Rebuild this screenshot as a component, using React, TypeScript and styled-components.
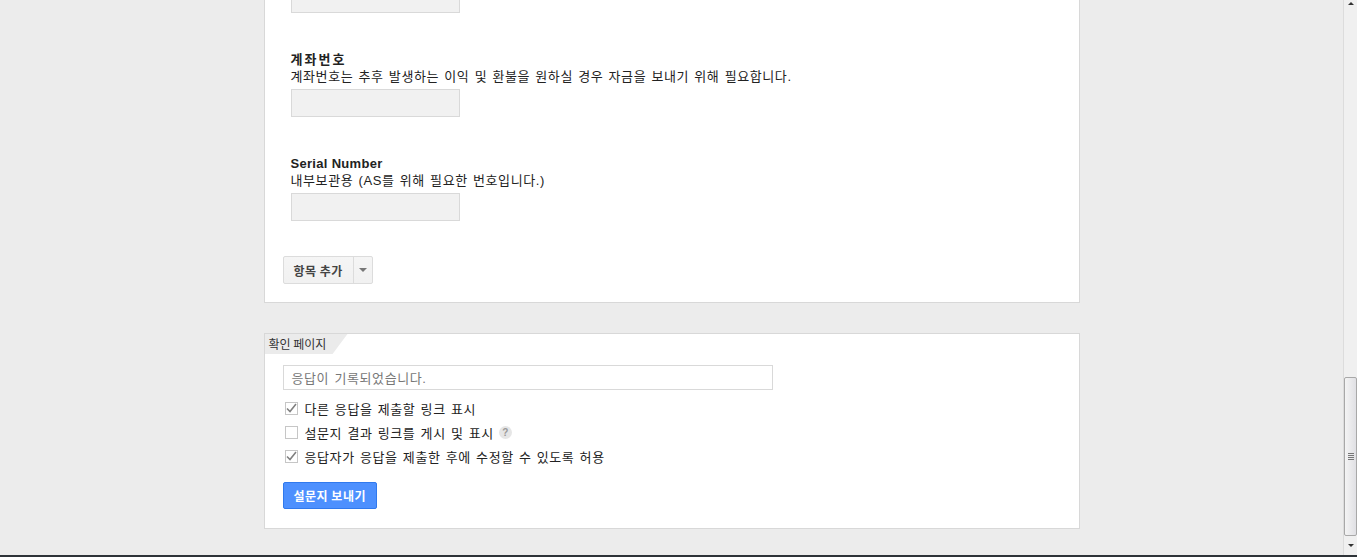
import styled, { createGlobalStyle } from "styled-components";
import { FC } from "react";

const GlobalStyle = createGlobalStyle`
  html, body {
    margin: 0;
    padding: 0;
    background: #ececec;
    overflow: hidden;
  }
  body {
    font-family: "Liberation Sans", "Noto Sans CJK KR", sans-serif;
    font-size: 13px;
    letter-spacing: 0.6px;
    word-spacing: 1px;
    color: #222;
  }
`;

const Screen = styled.div`
  width: 1357px;
  height: 557px;
  display: flex;
  flex-direction: column;
  overflow: hidden;
`;

const Window = styled.div`
  flex: 1;
  display: flex;
  min-height: 0;
`;

const Viewport = styled.main`
  flex: 1;
  overflow: hidden;
  display: flex;
  flex-direction: column;
  align-items: center;
`;

const Column = styled.div`
  width: 816px;
  margin-top: -32px;
  display: flex;
  flex-direction: column;
  gap: 30px;
`;

const Card = styled.section<{ $top?: number; $bottom?: number }>`
  background: #fff;
  border: 1px solid #d8d8d8;
  padding: ${(p) => p.$top ?? 0}px 18px ${(p) => p.$bottom ?? 18}px 18px;
  display: flex;
  flex-direction: column;
  align-items: flex-start;
`;

const FieldList = styled.div`
  display: flex;
  flex-direction: column;
  gap: 38px;
  padding-left: 8px;
`;

const Field = styled.div`
  display: flex;
  flex-direction: column;
`;

const FieldTitle = styled.div<{ $latin?: boolean }>`
  font-weight: bold;
  line-height: 17px;
  letter-spacing: ${(p) => (p.$latin ? "0.3px" : "2px")};
  word-spacing: 0;
  color: #222;
`;

const FieldHelp = styled.div`
  line-height: 17px;
  color: #222;
`;

const TextBox = styled.div<{ $w?: number; $h?: number }>`
  width: ${(p) => p.$w ?? 169}px;
  height: ${(p) => p.$h ?? 28}px;
  box-sizing: border-box;
  background: #f1f1f1;
  border: 1px solid #d9d9d9;
  margin-top: 4px;
`;

const SplitButton = styled.div`
  display: flex;
  margin-top: 35px;
  height: 28px;
  box-sizing: border-box;
  border: 1px solid #dcdcdc;
  border-radius: 2px;
  background: linear-gradient(#f5f5f5, #f1f1f1);
`;

const SplitLabel = styled.span`
  display: flex;
  align-items: center;
  padding: 0 10px;
  font-family: "Noto Sans CJK KR", sans-serif;
  font-size: 12px;
  font-weight: bold;
  letter-spacing: 0.5px;
  word-spacing: 0;
  color: #444;
  border-right: 1px solid #dcdcdc;
`;

const SplitArrow = styled.span`
  width: 18px;
  display: flex;
  align-items: center;
  justify-content: center;
  &::after {
    content: "";
    border-left: 4px solid transparent;
    border-right: 4px solid transparent;
    border-top: 4px solid #777;
  }
`;

const TabHeader = styled.div`
  align-self: stretch;
  margin: 0 -18px;
  height: 20px;
  display: flex;
`;

const TabLabel = styled.span`
  width: 83px;
  padding-left: 4px;
  box-sizing: border-box;
  background: #ebebeb;
  clip-path: polygon(0 0, 100% 0, 82% 100%, 0 100%);
  font-family: "Noto Sans CJK KR", sans-serif;
  font-size: 12px;
  letter-spacing: 0;
  word-spacing: 0;
  line-height: 20px;
  color: #333;
`;

const MessageInput = styled.div`
  width: 490px;
  height: 25px;
  box-sizing: border-box;
  margin-top: 11px;
  border: 1px solid #d9d9d9;
  padding-left: 8px;
  display: flex;
  align-items: center;
  color: #777;
`;

const CheckList = styled.div`
  display: flex;
  flex-direction: column;
  margin-top: 6px;
`;

const CheckRow = styled.label`
  height: 24px;
  display: flex;
  align-items: center;
  padding-left: 2px;
  color: #222;
`;

const Box = styled.span`
  width: 13px;
  height: 13px;
  margin-right: 7px;
  box-sizing: border-box;
  border: 1px solid #c6c6c6;
  background: #fff;
  display: flex;
  align-items: center;
  justify-content: center;
`;

const Help = styled.span`
  width: 13px;
  height: 13px;
  margin-left: 5px;
  border-radius: 50%;
  background: #e6e6e6;
  color: #999;
  font-size: 10px;
  font-weight: bold;
  letter-spacing: 0;
  display: inline-flex;
  align-items: center;
  justify-content: center;
`;

const SendButton = styled.button`
  margin-top: 14px;
  height: 27px;
  padding: 0 10px;
  border: 1px solid #3079ed;
  border-radius: 2px;
  background: #4d90fe;
  color: #fff;
  font-family: "Noto Sans CJK KR", sans-serif;
  font-size: 12px;
  font-weight: bold;
  letter-spacing: 0.5px;
  word-spacing: 0;
`;

const Scrollbar = styled.div`
  width: 14px;
  border-left: 1px solid #dcdcdc;
  background: #f0f0f0;
  display: flex;
  flex-direction: column;
  box-sizing: border-box;
`;

const ScrollArrow = styled.div<{ $up?: boolean }>`
  height: ${(p) => (p.$up ? 8 : 19)}px;
  display: flex;
  align-items: ${(p) => (p.$up ? "flex-start" : "center")};
  justify-content: center;
  padding-top: ${(p) => (p.$up ? 2 : 0)}px;
  &::after {
    content: "";
    border-left: 3px solid transparent;
    border-right: 3px solid transparent;
    ${(p) =>
      p.$up ? "border-bottom: 3px solid #333;" : "border-top: 3px solid #333;"}
  }
`;

const Track = styled.div`
  flex: 1;
  display: flex;
  flex-direction: column;
  justify-content: flex-end;
`;

const Thumb = styled.div`
  height: 159px;
  box-sizing: border-box;
  border: 1px solid #a8a8a8;
  border-radius: 2px;
  background: linear-gradient(to right, #f4f4f4, #e0e0e4);
  display: flex;
  align-items: center;
  justify-content: center;
`;

const Grip = styled.span`
  width: 6px;
  height: 7px;
  background: repeating-linear-gradient(#777 0 1px, transparent 1px 2px);
`;

const Taskbar = styled.div`
  height: 2px;
  background: #2e3338;
`;

const Check: FC = () => (
  <svg width="11" height="10" viewBox="0 0 11 10">
    <path d="M1 5.5 L4 8.5 L10 1" fill="none" stroke="#808080" strokeWidth="1.6" />
  </svg>
);

const options = [
  { label: "다른 응답을 제출할 링크 표시", checked: true },
  { label: "설문지 결과 링크를 게시 및 표시", checked: false, help: true },
  { label: "응답자가 응답을 제출한 후에 수정할 수 있도록 허용", checked: true },
];

export default function App() {
  return (
    <>
      <GlobalStyle />
      <Screen>
        <Window>
          <Viewport>
            <Column>
              <Card $top={12} $bottom={18}>
                <FieldList>
                  <TextBox />
                  <Field>
                    <FieldTitle>계좌번호</FieldTitle>
                    <FieldHelp>
                      계좌번호는 추후 발생하는 이익 및 환불을 원하실 경우 자금을
                      보내기 위해 필요합니다.
                    </FieldHelp>
                    <TextBox />
                  </Field>
                  <Field>
                    <FieldTitle $latin>Serial Number</FieldTitle>
                    <FieldHelp>내부보관용 (AS를 위해 필요한 번호입니다.)</FieldHelp>
                    <TextBox />
                  </Field>
                </FieldList>
                <SplitButton>
                  <SplitLabel>항목 추가</SplitLabel>
                  <SplitArrow />
                </SplitButton>
              </Card>

              <Card $bottom={19}>
                <TabHeader>
                  <TabLabel>확인 페이지</TabLabel>
                </TabHeader>
                <MessageInput>응답이 기록되었습니다.</MessageInput>
                <CheckList>
                  {options.map((o) => (
                    <CheckRow key={o.label}>
                      <Box>{o.checked && <Check />}</Box>
                      {o.label}
                      {o.help && <Help>?</Help>}
                    </CheckRow>
                  ))}
                </CheckList>
                <SendButton>설문지 보내기</SendButton>
              </Card>
            </Column>
          </Viewport>
          <Scrollbar>
            <ScrollArrow $up />
            <Track>
              <Thumb>
                <Grip />
              </Thumb>
            </Track>
            <ScrollArrow />
          </Scrollbar>
        </Window>
        <Taskbar />
      </Screen>
    </>
  );
}
